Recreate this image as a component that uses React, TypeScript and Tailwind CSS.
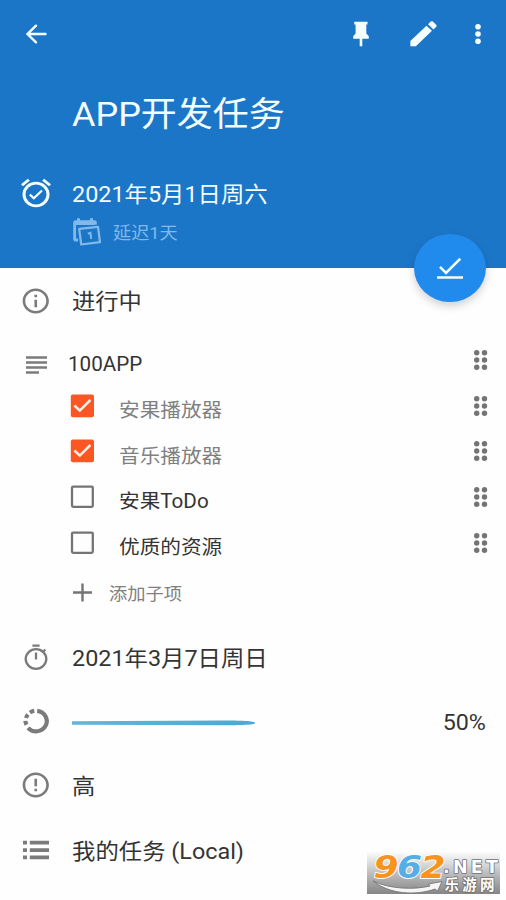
import type { ReactNode } from "react";

const FONT = "font-['Roboto','Noto_Sans_CJK_SC',sans-serif]";

function Label({ className = "", children }: { className?: string; children: ReactNode }) {
  return (
    <span className={`inline-block origin-left translate-y-px scale-x-[1.058] whitespace-nowrap leading-none ${className}`}>
      {children}
    </span>
  );
}

function Glyph({ d, w = 36, h = 34.2, className = "" }: { d: string; w?: number; h?: number; className?: string }) {
  return (
    <svg width={w} height={h} viewBox="0 0 24 24" preserveAspectRatio="none" fill="currentColor" className={`shrink-0 ${className}`}>
      <path d={d} />
    </svg>
  );
}

function IconCell({ children }: { children: ReactNode }) {
  return <div className="flex w-[72px] shrink-0 items-center justify-center text-[#7b7b7b]">{children}</div>;
}

function Row({ icon, children }: { icon: ReactNode; children: ReactNode }) {
  return (
    <div className="flex h-16 items-center">
      <IconCell>{icon}</IconCell>
      {children}
    </div>
  );
}

function DragHandle() {
  return (
    <svg width="16" height="22" viewBox="0 0 16 22" fill="#747474" className="mr-[18px] -mt-[8px] ml-auto shrink-0">
      {[3.7, 11, 18.3].map((y) => (
        <g key={y}>
          <circle cx="4.7" cy={y} r="2.7" />
          <circle cx="12.5" cy={y} r="2.7" />
        </g>
      ))}
    </svg>
  );
}

function Checkbox({ checked }: { checked: boolean }) {
  return (
    <svg width="24" height="24" viewBox="0 0 24 24" fill="none" className="-mt-[8px] shrink-0">
      {checked ? (
        <>
          <rect x="0.8" y="0.6" width="23.2" height="22.6" rx="2" fill="#fb5624" />
          <path d="M4.4 11.5L9.8 16.6L20.4 6" stroke="#fff0e6" strokeWidth="2.5" />
        </>
      ) : (
        <rect x="2" y="1.6" width="20.8" height="20.2" rx="1.2" stroke="#747474" strokeWidth="2.3" />
      )}
    </svg>
  );
}

const tasks = [
  { text: "安果播放器", done: true },
  { text: "音乐播放器", done: true },
  { text: "安果ToDo", done: false },
  { text: "优质的资源", done: false },
];

function Header() {
  return (
    <header className="relative h-[268px] bg-[#1c76c8] text-[#f4feff]">
      <div className="flex h-[67px] items-center">
        <svg width="22" height="20" viewBox="0 0 22 20" fill="none" stroke="currentColor" strokeWidth="2.4" className="ml-[25px]" strokeLinecap="round">
          <path d="M20.5 10H2.5M11 1.7L2.5 10L11 18.3" />
        </svg>
        <svg width="16" height="26" viewBox="0 0 16 26" fill="currentColor" className="mr-[37px] ml-auto">
          <path d="M1.2 .7H14.5V3.6H13.3V12.4L15.8 15.3V17.7H9.3V25.2H6.7V17.7H.2V15.3L2.6 12.4V3.6H1.2Z" />
        </svg>
        <Glyph
          w={35}
          h={33.5}
          className="mr-[32.5px]"
          d="M20.71 7.04c.39-.39.39-1.04 0-1.41l-2.34-2.34c-.37-.39-1.02-.39-1.41 0l-1.84 1.83 3.75 3.75M3 17.25V21h3.75L17.81 9.93l-3.75-3.75L3 17.25z"
        />
        <svg width="8" height="22" viewBox="0 0 8 22" fill="currentColor" className="mr-[24.5px]">
          <circle cx="4" cy="3.8" r="2.8" />
          <circle cx="4" cy="11" r="2.8" />
          <circle cx="4" cy="18.2" r="2.8" />
        </svg>
      </div>
      <h1 className="flex h-[91px] items-center pl-[72px] font-normal">
        <Label className="text-[34px]">APP开发任务</Label>
      </h1>
      <div className="mt-[15px] flex h-10 items-center">
        <div className="flex w-[72px] justify-center">
          <Glyph d="M10.54 14.53L8.41 12.4L7.35 13.46L10.53 16.64L16.53 10.64L15.47 9.58L10.54 14.53M12 20A7 7 0 0 1 5 13A7 7 0 0 1 12 6A7 7 0 0 1 19 13A7 7 0 0 1 12 20M12 4A9 9 0 1 0 21 13A9 9 0 0 0 12 4M7.88 3.39L6.6 1.86L2 5.71L3.29 7.24L7.88 3.39M22 5.72L17.4 1.86L16.11 3.39L20.71 7.25L22 5.72Z" />
        </div>
        <Label className="text-[22.1px]">2021年5月1日周六</Label>
      </div>
      <div className="flex h-[38px] items-center pl-[72px] text-[#82b9e9]">
        <svg width="30" height="30" viewBox="0 0 30 30" className="mr-[11px]" fill="none">
          <path d="M3.6 3.2H5V1.2H8V3.2H18V1.2H21V3.2H22.5C24 3.2 24.8 4.2 24.8 5.5V8H4V21.5H6V24.5H3.5C2 24.5 1.2 23.5 1.2 22V5.5C1.2 4.2 2 3.2 3.6 3.2Z" fill="currentColor" />
          <path d="M7.2 11.8L26 9.8L28 25.2L9.2 27.5Z" stroke="#1c76c8" strokeWidth="4.6" />
          <path d="M7.2 11.8L26 9.8L28 25.2L9.2 27.5Z" stroke="currentColor" strokeWidth="2.2" strokeLinejoin="round" />
          <path d="M15.8 16.6L18.4 15.8L19.2 21.8" stroke="currentColor" strokeWidth="2" />
        </svg>
        <Label className="mt-px text-[17.2px]">延迟1天</Label>
      </div>
      <button className="absolute top-[234px] left-[413.5px] flex h-[68px] w-[72px] items-center justify-center rounded-[50%] bg-[#218bed] shadow-[0_4px_8px_rgba(0,0,0,0.18)]" aria-label="完成">
        <svg width="28" height="24" viewBox="0 0 28 24" fill="none" stroke="currentColor" strokeWidth="2.6">
          <path d="M4 10.8L10 16.8L24.3 2.6M1 21.5H27" />
        </svg>
      </button>
    </header>
  );
}

function SiteMark() {
  return (
    <svg width="133" height="43" viewBox="0 0 133 43" className="absolute top-[851px] left-[367px] overflow-visible">
      <defs>
        <linearGradient id="plate" x2="0" y2="1">
          <stop offset="0" stopColor="#fff" />
          <stop offset="0.5" stopColor="#c0c0c0" />
          <stop offset="1" stopColor="#858585" />
        </linearGradient>
      </defs>
      <rect width="133" height="43" fill="url(#plate)" />
      <path d="M6 30C22 38 47 39 63 35L61.5 33L75 30.5L70.5 40L68 38C48 45 22 43 6 30Z" fill="#f5f5f5" stroke="#6f6f6f" strokeWidth="0.8" />
      <g fontFamily="DejaVu Sans, sans-serif" fontWeight="700" fontStyle="italic" fontSize="32" stroke="#fff" strokeWidth="1.8" strokeLinejoin="round" paintOrder="stroke">
        <text x="6.5" y="26.5" textLength="25" lengthAdjust="spacingAndGlyphs" fill="#f7941d">9</text>
        <text x="30" y="26.5" textLength="25" lengthAdjust="spacingAndGlyphs" fill="#55aee6">6</text>
        <text x="53.5" y="26.5" textLength="25" lengthAdjust="spacingAndGlyphs" fill="#f7941d">2</text>
      </g>
      <g fill="#fff" stroke="#707070" strokeWidth="1.6" strokeLinejoin="round" paintOrder="stroke" fontWeight="700">
        <text x="76" y="21.5" fontFamily="DejaVu Sans, sans-serif" fontSize="17.5" textLength="55" lengthAdjust="spacing">.NET</text>
        <text x="77.5" y="39" fontFamily="Noto Sans CJK SC, sans-serif" fontSize="14.5" textLength="50">乐游网</text>
      </g>
    </svg>
  );
}

export default function App() {
  return (
    <main className={`relative h-[900px] w-[506px] overflow-hidden bg-[#fefefe] text-[#343434] ${FONT}`}>
      <Header />
      <div className="flex h-[66px] items-center">
        <IconCell>
          <Glyph w={31.5} h={30} className="-mt-px" d="M11 7h2v2h-2zm0 4h2v6h-2zm1-9C6.48 2 2 6.48 2 12s4.48 10 10 10 10-4.48 10-10S17.52 2 12 2m0 18c-4.41 0-8-3.59-8-8s3.59-8 8-8 8 3.59 8 8-3.59 8-8 8" />
        </IconCell>
        <Label className="text-[22px]">进行中</Label>
      </div>

      <section className="pt-[7px]">
        <div className="flex h-[46px] items-center">
          <IconCell>
            <svg width="21" height="18" viewBox="0 0 21 18" fill="currentColor" className="mt-px">
              <path d="M0 .3H21V2.7H0ZM0 5.3H21V7.7H0ZM0 10.3H21V12.7H0ZM0 15.3H13V17.7H0Z" />
            </svg>
          </IconCell>
          <Label className="-ml-[4.5px] text-[19.5px]">100APP</Label>
          <DragHandle />
        </div>
        {tasks.map((task) => (
          <div key={task.text} className="flex h-[45.6px] items-center pl-[70px]">
            <Checkbox checked={task.done} />
            <Label className={task.done ? "ml-[24.5px] text-[19.5px] text-[#808080]" : "ml-[24.5px] text-[19.5px]"}>{task.text}</Label>
            <DragHandle />
          </div>
        ))}
        <div className="flex h-[47px] items-center pl-[73px] text-[#808080]">
          <svg width="19" height="19" viewBox="0 0 19 19" stroke="#747474" strokeWidth="2.4">
            <path d="M0 9.5H19M9.5 .5V18.5" />
          </svg>
          <Label className="ml-[16.5px] mt-px text-[17.3px]">添加子项</Label>
        </div>
      </section>

      <section className="pt-[9.6px]">
        <Row
          icon={
            <svg width="26" height="26" viewBox="0 0 26 26" fill="none" stroke="currentColor" strokeWidth="2.3" className="-mt-[2px]">
              <ellipse cx="13" cy="15" rx="10.3" ry="9.8" />
              <path d="M9.4 1.6H16.6M13 8.5V15.5M20 7.8L22.3 5.6" />
            </svg>
          }
        >
          <Label className="-mt-[2px] text-[22.1px]">2021年3月7日周日</Label>
        </Row>
        <Row
          icon={
            <svg width="28" height="28" viewBox="0 0 28 28" fill="none" stroke="currentColor" strokeWidth="4.2" className="-mt-[2px]">
              <path d="M15.2 3.8A10.7 10.3 0 1 1 6 20.8" />
              <path d="M4.5 17.8A10.7 10.3 0 0 1 3.4 13.8M4 11A10.7 10.3 0 0 1 5.9 7.5M8 5.6A10.7 10.3 0 0 1 12.3 3.8" />
            </svg>
          }
        >
          <svg width="184" height="8" viewBox="0 0 184 8" className="mt-[2px]">
            <defs>
              <linearGradient id="bar">
                <stop stopColor="#62b6dc" />
                <stop offset="1" stopColor="#45abdb" />
              </linearGradient>
            </defs>
            <path d="M0 2.2L150 1.6C168 1.6 183 2 183 4S168 6.2 150 6.2L0 5.8Z" fill="url(#bar)" />
          </svg>
          <Label className="mr-[20.5px] ml-auto origin-right text-[22px]">50%</Label>
        </Row>
        <Row
          icon={
            <Glyph w={31.5} h={30} className="-mt-px" d="M11 15h2v2h-2zm0-8h2v6h-2zm1-5C6.48 2 2 6.48 2 12s4.48 10 10 10 10-4.48 10-10S17.52 2 12 2m0 18c-4.42 0-8-3.58-8-8s3.58-8 8-8 8 3.58 8 8-3.58 8-8 8" />
          }
        >
          <Label className="text-[22px]">高</Label>
        </Row>
        <Row
          icon={
            <svg width="26" height="20" viewBox="0 0 26 20" fill="currentColor">
              <path d="M0 .8H4V4.5H0ZM6.8 .8H26V4.5H6.8ZM0 8.2H4V11.9H0ZM6.8 8.2H26V11.9H6.8ZM0 15.6H4V19.3H0ZM6.8 15.6H26V19.3H6.8Z" />
            </svg>
          }
        >
          <Label className="text-[22.1px]">我的任务 (Local)</Label>
        </Row>
      </section>
      <SiteMark />
    </main>
  );
}
